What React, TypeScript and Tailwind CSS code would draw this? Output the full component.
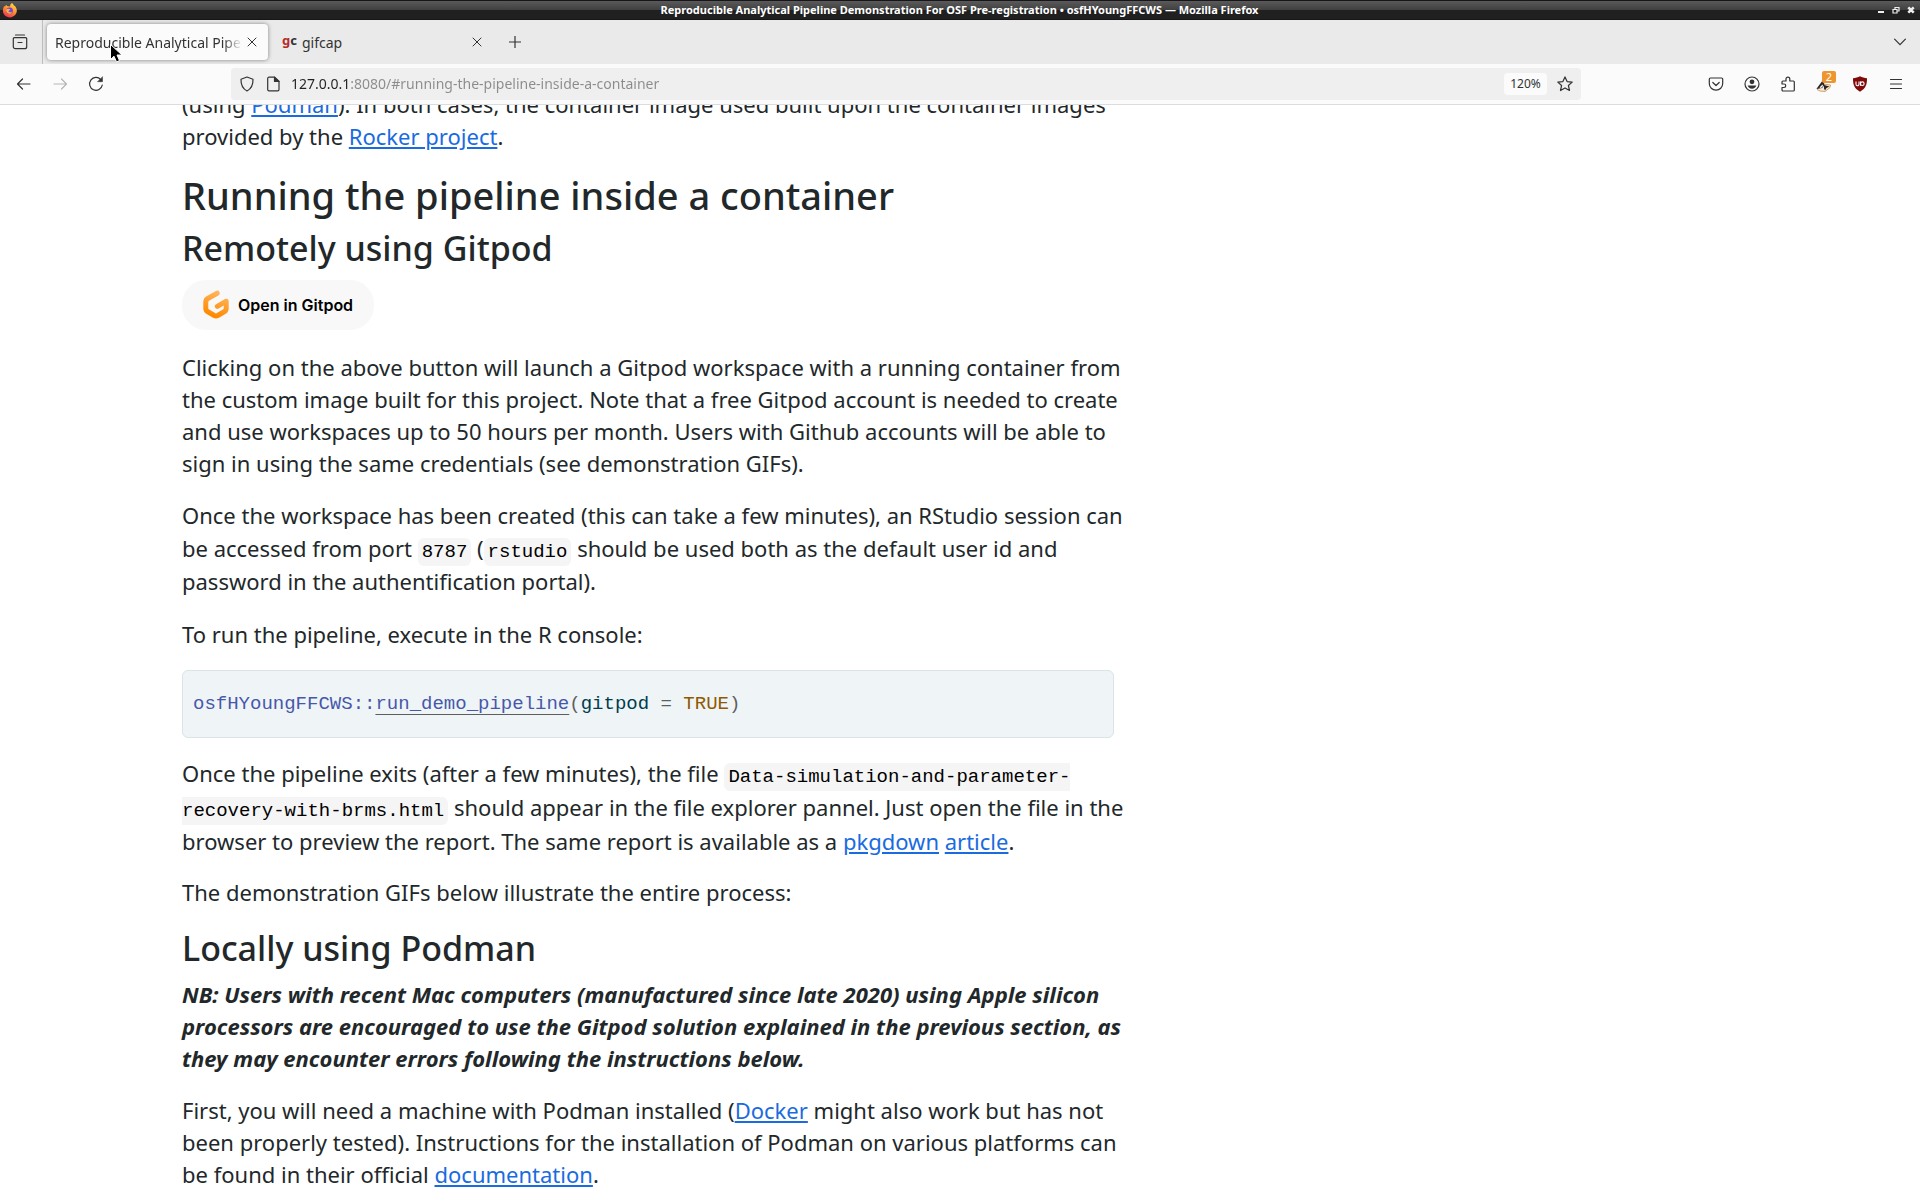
import React from "react";

type IconProps = { className?: string; children: React.ReactNode };

function Icon({ className = "", children }: IconProps) {
  return (
    <svg
      viewBox="0 0 16 16"
      aria-hidden="true"
      className={"size-4 shrink-0 " + className}
      fill="none"
      stroke="currentColor"
      strokeWidth="1.2"
      strokeLinecap="round"
      strokeLinejoin="round"
    >
      {children}
    </svg>
  );
}

function ToolButton({ label, className = "", children }: { label: string; className?: string; children: React.ReactNode }) {
  return (
    <button type="button" aria-label={label} className={"flex size-9 items-center justify-center " + className}>
      {children}
    </button>
  );
}

function FirefoxLogo() {
  return (
    <svg viewBox="0 0 16 16" aria-hidden="true" className="size-4">
      <defs>
        <linearGradient id="fx" x1="0.8" y1="0" x2="0.3" y2="1">
          <stop offset="0" stopColor="#ffe04a" />
          <stop offset="0.45" stopColor="#ff9a2e" />
          <stop offset="1" stopColor="#f0304e" />
        </linearGradient>
      </defs>
      <path
        fill="url(#fx)"
        d="M10 1c1 .8 1.500 1.500 1.800 2.300.7.500 1.500 1 2 2 1.500 2.500 1.400 5-.3 7.300C12 14.500 10 15.400 8 15.400 4 15.400.9 12.400.9 8.500c0-2 .7-3.700 1.700-4.800 0 .5.1.8.3 1 .4-.9 1-1.500 1.600-2 0 .6.2 1 .6 1.300L8 4.600C8 3 8.600 1.800 10 1z"
      />
      <circle cx="7.600" cy="8.800" r="3.300" fill="#7446d8" />
      <path fill="#ffb13a" d="M4.200 7.600c1-1 2-.9 3.200-.5 1 .3 1 .9-.2 1.300-.9.300-.8 1.100-.1 1.500 1 .6 2.200.1 3 .5-1 1.500-3.500 1.700-4.900.4-.8-.8-1.300-2-1-3.200z" />
    </svg>
  );
}

function GitpodLogo() {
  return (
    <svg viewBox="0 0 26 30" aria-hidden="true" className="h-[30px] w-[26px]">
      <defs>
        <linearGradient id="gp" x1="0.7" y1="0" x2="0.4" y2="1">
          <stop offset="0" stopColor="#ffb45b" />
          <stop offset="1" stopColor="#ff8a00" />
        </linearGradient>
      </defs>
      <path
        d="M14.200 3.200 4.800 8.500Q2.800 9.700 2.800 12v6.500q0 2 1.700 3l6.800 4q1.700.9 3.400 0l6.800-4q1.700-1 1.700-3v-7.300l-8.900 5.100"
        fill="none"
        stroke="url(#gp)"
        strokeWidth="5"
        strokeLinecap="round"
        strokeLinejoin="round"
      />
    </svg>
  );
}

function TitleBar() {
  return (
    <header className="flex h-5 shrink-0 items-center justify-between border-y border-[#17151a] bg-linear-to-b from-[#5a5a5a] from-0% via-[#404040] via-50% to-[#202020] to-50% pl-0.5 text-white">
      <div className="flex flex-1">
        <FirefoxLogo />
      </div>
      <h1 className="text-[11px] leading-4 font-bold">
        Reproducible Analytical Pipeline Demonstration For OSF Pre-registration • osfHYoungFFCWS — Mozilla Firefox
      </h1>
      <div className="flex flex-1 justify-end gap-[3px] pr-[3px]">
        <button type="button" aria-label="Minimize" className="flex w-3 items-center justify-center">
          <svg viewBox="0 0 8 8" className="size-2" aria-hidden="true"><path d="M1 5h6v2H1z" fill="#eee" /></svg>
        </button>
        <button type="button" aria-label="Restore" className="flex w-3 items-center justify-center">
          <svg viewBox="0 0 8 8" className="size-2" aria-hidden="true" fill="none" stroke="#eee" strokeWidth="1.200">
            <path d="M3 3V1.500h4v3.500H5" />
            <path d="M1 3.500h4v3.500H1z" />
          </svg>
        </button>
        <button type="button" aria-label="Close window" className="flex w-3 items-center justify-center">
          <svg viewBox="0 0 8 8" className="size-2" aria-hidden="true" stroke="#eee" strokeWidth="2.600"><path d="M1.300 1.300l5.400 5.400M6.700 1.300 1.300 6.700" /></svg>
        </button>
      </div>
    </header>
  );
}

function CloseIcon() {
  return (
    <svg viewBox="0 0 8 8" aria-hidden="true" className="size-2 overflow-visible" stroke="currentColor" strokeWidth="1" strokeLinecap="round">
      <path d="M0 0l8 8M8 0l-8 8" />
    </svg>
  );
}

function TabBar() {
  return (
    <nav aria-label="Tabs" className="flex h-11 shrink-0 items-center bg-[#eaeaea] text-[#333]">
      <button type="button" aria-label="Recent browsing" className="flex h-full w-[43px] items-center justify-center border-r border-[#bdbdbd] pr-0.5">
        <Icon>
          <path d="M3.500 1h9" />
          <path d="M2.300 3.700h11.400a1 1 0 0 1 1 1v8a2 2 0 0 1-2 2H3.300a2 2 0 0 1-2-2v-8a1 1 0 0 1 1-1z" />
          <path d="M6 8.500h4" />
        </Icon>
      </button>
      <div className="ml-1 flex h-9 w-[221px] items-center rounded bg-[#fbfbfb] pr-2.5 pl-2 shadow-[0_0_4px_rgba(0,0,0,0.45)]">
        <button type="button" className="flex-1 overflow-hidden mask-r-from-90% mask-r-to-100% pt-0.5 text-left text-[14px] leading-5 whitespace-nowrap">
          Reproducible Analytical Pipeline
        </button>
        <button type="button" aria-label="Close tab" className="ml-1 flex size-3 items-center justify-center"><CloseIcon /></button>
      </div>
      <div className="ml-1 flex h-9 w-[221px] items-center pr-2.5 pl-2.5">
        <span aria-hidden="true" className="w-5 pb-1 text-[13px] leading-5 font-bold text-[#333]"><span className="text-[#b62a2a]">g</span>c</span>
        <button type="button" className="flex-1 pt-0.5 text-left text-[14px] leading-5">gifcap</button>
        <button type="button" aria-label="Close tab" className="flex size-3 items-center justify-center"><CloseIcon /></button>
      </div>
      <button type="button" aria-label="New tab" className="ml-2 flex size-7 items-center justify-center">
        <svg viewBox="0 0 12 12" aria-hidden="true" className="size-3" stroke="currentColor" strokeWidth="1.200"><path d="M6 0v12M0 6h12" /></svg>
      </button>
      <button type="button" aria-label="List all tabs" className="mr-3 ml-auto flex size-4 items-center justify-center">
        <svg viewBox="0 0 12 8" aria-hidden="true" className="h-2 w-3" fill="none" stroke="currentColor" strokeWidth="1.200" strokeLinecap="round"><path d="M.6 1.200 6 6.600l5.400-5.400" /></svg>
      </button>
    </nav>
  );
}

function NavBar() {
  return (
    <div className="flex h-[41px] shrink-0 items-center border-b border-[#dcdcdc] bg-[#fbfbfb] text-[#333]">
      <div className="flex w-[215px] shrink-0 pl-1.5">
        <ToolButton label="Back">
          <Icon><path d="M14 8H1.500M6.500 3l-5 5 5 5" /></Icon>
        </ToolButton>
        <ToolButton label="Forward" className="text-[#b5b5b5]">
          <Icon><path d="M2 8h12.500M9.500 3l5 5-5 5" /></Icon>
        </ToolButton>
        <ToolButton label="Reload">
          <Icon>
            <path d="M14.300 9A6.400 6.400 0 1 1 12.800 3.600" />
            <path d="M14.500 1v4.700H9.800z" fill="currentColor" strokeWidth="0.500" />
          </Icon>
        </ToolButton>
      </div>
      <form className="ml-4 flex h-8 flex-1 items-center gap-2.5 rounded bg-[#efefef] px-2" onSubmit={(e) => e.preventDefault()}>
        <Icon>
          <path d="M8 1 14 3.200c.2 5.300-1.500 9.300-6 11.800C3.500 12.500 1.800 8.500 2 3.200z" />
        </Icon>
        <Icon>
          <path d="M4 1.200h5.500L14 5.500v8a1.300 1.300 0 0 1-1.300 1.300H4a1.300 1.300 0 0 1-1.300-1.300v-11A1.300 1.300 0 0 1 4 1.200z" />
          <path d="M9.500 1.200V5.500H14z" fill="currentColor" />
        </Icon>
        <input
          type="text"
          aria-label="Address"
          defaultValue="127.0.0.1:8080/#running-the-pipeline-inside-a-container"
          className="min-w-0 flex-1 bg-[linear-gradient(to_right,#222_59px,#8b8b8b_59px)] bg-clip-text text-[14px] leading-5 text-transparent outline-none"
        />
        <button type="button" className="h-[22px] w-[43px] rounded bg-[#fbfbfb] text-[12px] leading-4">120%</button>
        <button type="button" aria-label="Bookmark this page">
          <Icon><path d="M8 .9l2.100 4.700 5.100.5-3.800 3.400 1.100 5L8 11.900l-4.500 2.600 1.100-5L.8 6.100l5.100-.5z" /></Icon>
        </button>
      </form>
      <div className="flex w-[339px] shrink-0 justify-end pr-1.5">
        <ToolButton label="Save to Pocket">
          <Icon>
            <path d="M2.500 2h11A1.200 1.200 0 0 1 14.700 3.200V7.500a6.700 6.700 0 0 1-13.400 0V3.200A1.200 1.200 0 0 1 2.500 2z" />
            <path d="M4.800 6.500 8 9.500l3.200-3" />
          </Icon>
        </ToolButton>
        <ToolButton label="Account">
          <Icon>
            <circle cx="8" cy="8" r="7" />
            <circle cx="8" cy="5.800" r="2.400" fill="currentColor" stroke="none" />
            <path d="M3.600 9.600h8.800c-.6 2-2.200 3.200-4.400 3.200S4.200 11.600 3.600 9.600z" fill="currentColor" stroke="none" />
          </Icon>
        </ToolButton>
        <ToolButton label="Extensions">
          <Icon>
            <path d="M2 8V6a1 1 0 0 1 1-1h3V3a1.900 1.900 0 0 1 3.800 0v2H13.300a1 1 0 0 1 1 1v8a1 1 0 0 1-1 1H3a1 1 0 0 1-1-1v-2.500h2a1.700 1.700 0 0 0 0-3.500z" />
          </Icon>
        </ToolButton>
        <ToolButton label="Privacy extension, 2 notices" className="relative">
          <svg viewBox="0 0 16 16" aria-hidden="true" className="size-4">
            <path d="M1 13.500 7 8l7.500 1-.5 2.500-5 4-5-.5z" fill="#f3eadc" stroke="#c98a4a" strokeWidth="0.800" />
            <path d="M.3 13 7 4l1.500 5L6 12z" fill="#2a2622" />
            <path d="M8 9l5.500 1.500-3 1.500-1.500 2.500-1-2z" fill="#2a2622" />
            <path d="M3.500 11.500 6.500 8.500l.5 1.500-2 2z" fill="#fff" />
          </svg>
          <span className="absolute top-[5px] right-1.5 h-3 w-3.5 rounded-[2px] bg-[#ee9530] text-[11px] leading-3 text-white">2</span>
        </ToolButton>
        <ToolButton label="uBlock Origin">
          <svg viewBox="0 0 16 16" aria-hidden="true" className="size-4">
            <path d="M8 .3c2 1.200 4.500 1.700 7 1.900 0 6-.8 9.800-7 13.500C1.800 12 1 8.200 1 2.200 3.500 2 6 1.500 8 .3z" fill="#800a0a" />
            <path d="M4 5.500v2.700a1.500 1.500 0 0 0 3 0V5.500M8.500 5.500v4.200" fill="none" stroke="#fff" strokeWidth="1.100" />
            <circle cx="10.300" cy="7.700" r="1.800" fill="none" stroke="#fff" strokeWidth="1.100" />
          </svg>
        </ToolButton>
        <ToolButton label="Menu">
          <Icon><path d="M2.500 3.500h11M2.500 8h11M2.500 12.500h11" /></Icon>
        </ToolButton>
      </div>
    </div>
  );
}

function Link({ children }: { children: React.ReactNode }) {
  return (
    <a href="#link" className="text-[#1a6bdf] underline">
      {children}
    </a>
  );
}

function Code({ children }: { children: React.ReactNode }) {
  return (
    <code className="rounded-md bg-[#f5f5f5] px-1 py-[3px] font-['Liberation_Mono',monospace] text-[19px] leading-none text-black">{children}</code>
  );
}

function Article() {
  return (
    <main className="min-h-0 flex-1 overflow-hidden bg-white pl-[182px] text-[22px] leading-8 text-[#22282a]">
      <article className="-mt-[17px] flex max-w-[950px] flex-col">
        <p>
          (using <Link>Podman</Link>). In both cases, the container image used built upon the container images provided by the <Link>Rocker project</Link>.
        </p>
        <h2 className="mt-5 text-[38px] leading-[46px] font-medium">Running the pipeline inside a container</h2>
        <h3 className="mt-2.5 text-[34px] leading-10 font-medium">Remotely using Gitpod</h3>
        <a href="#gitpod" className="mt-3 flex h-[50px] w-48 items-center gap-[9px] rounded-3xl bg-[#f8f8f8] pl-[21px] text-black">
          <GitpodLogo />
          <span className="font-[Inter,sans-serif] text-[16px] leading-6 font-semibold">Open in Gitpod</span>
        </a>
        <p className="mt-[21px]">
          Clicking on the above button will launch a Gitpod workspace with a running container from the custom image built for this project. Note that a free Gitpod account is needed to create and use workspaces up to 50 hours per month. Users with Github accounts will be able to sign in using the same credentials (see demonstration GIFs).
        </p>
        <p className="mt-5 leading-[33px]">
          Once the workspace has been created (this can take a few minutes), an RStudio session can be accessed from port <Code>8787</Code> (<Code>rstudio</Code> should be used both as the default user id and password in the authentification portal).
        </p>
        <p className="mt-5">To run the pipeline, execute in the R console:</p>
        <pre className="mt-5 flex h-[68px] max-w-[932px] items-center rounded-md border border-[#dbe3e5] bg-[#eff5f6] px-2.5 font-['Liberation_Mono',monospace] text-[19px] leading-7 text-[#5e5e5e]">
          <code>
            <span className="text-[#4758ab]">osfHYoungFFCWS::</span>
            <a href="#run" className="text-[#4758ab] underline decoration-[#5e5e5e] decoration-1 underline-offset-[5px]">run_demo_pipeline</a>(<span className="text-[#003b4f]">gitpod</span> = <span className="text-[#8f5902]">TRUE</span>)
          </code>
        </pre>
        <p className="mt-[18px] leading-[34px]">
          Once the pipeline exits (after a few minutes), the file <Code>Data-simulation-and-parameter-recovery-with-brms.html</Code> should appear in the file explorer pannel. Just open the file in the browser to preview the report. The same report is available as a <Link>pkgdown</Link> <Link>article</Link>.
        </p>
        <p className="mt-[18px]">The demonstration GIFs below illustrate the entire process:</p>
        <h3 className="mt-5 text-[34px] leading-10 font-medium">Locally using Podman</h3>
        <p className="mt-2.5 font-bold italic">
          NB: Users with recent Mac computers (manufactured since late 2020) using Apple silicon processors are encouraged to use the Gitpod solution explained in the previous section, as they may encounter errors following the instructions below.
        </p>
        <p className="mt-5">
          First, you will need a machine with Podman installed (<Link>Docker</Link> might also work but has not been properly tested). Instructions for the installation of Podman on various platforms can be found in their official <Link>documentation</Link>.
        </p>
      </article>
    </main>
  );
}

function Cursor() {
  return (
    <svg viewBox="0 0 14 20" aria-hidden="true" className="pointer-events-none absolute top-[43px] left-[109px] h-5 w-3.5">
      <path d="M1.500 1.500v15l3.500-3.300 2.500 5.700 3-1.300L8 12h5z" fill="#000" stroke="#fff" strokeWidth="1" />
    </svg>
  );
}

export default function App() {
  return (
    <div className="relative flex h-screen flex-col overflow-hidden font-['Noto_Sans',sans-serif]">
      <TitleBar />
      <TabBar />
      <NavBar />
      <Article />
      <Cursor />
    </div>
  );
}
